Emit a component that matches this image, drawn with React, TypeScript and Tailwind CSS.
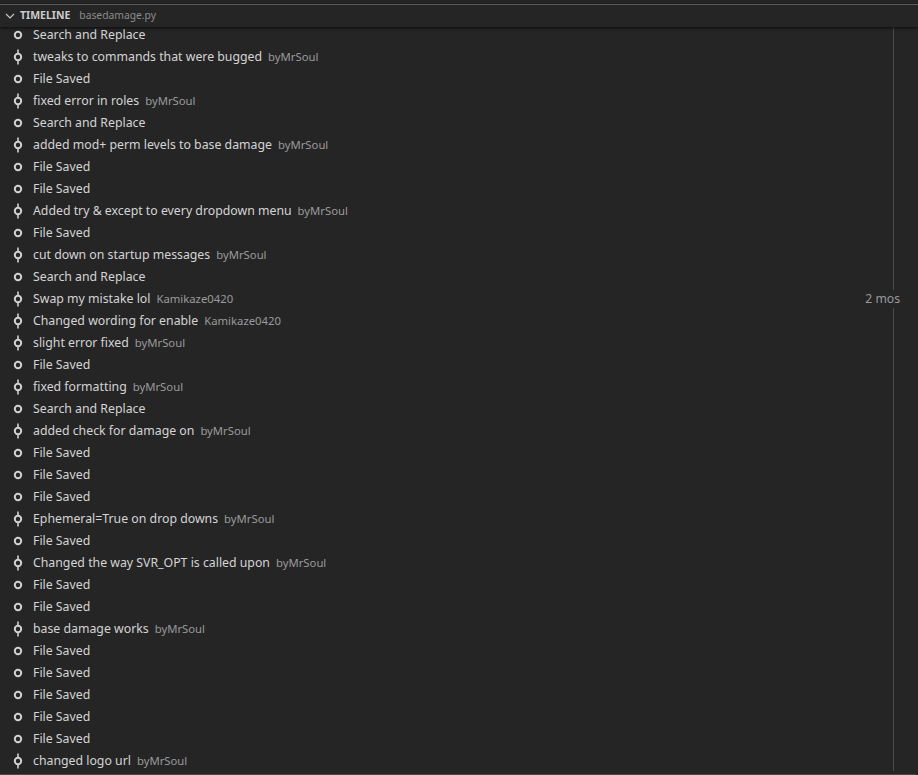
import React from "react";

type Item = { label: string; author?: string; time?: string };

const items: Item[] = [
  { label: "Search and Replace" },
  { label: "tweaks to commands that were bugged", author: "byMrSoul" },
  { label: "File Saved" },
  { label: "fixed error in roles", author: "byMrSoul" },
  { label: "Search and Replace" },
  { label: "added mod+ perm levels to base damage", author: "byMrSoul" },
  { label: "File Saved" },
  { label: "File Saved" },
  { label: "Added try & except to every dropdown menu", author: "byMrSoul" },
  { label: "File Saved" },
  { label: "cut down on startup messages", author: "byMrSoul" },
  { label: "Search and Replace" },
  { label: "Swap my mistake lol", author: "Kamikaze0420", time: "2 mos" },
  { label: "Changed wording for enable", author: "Kamikaze0420" },
  { label: "slight error fixed", author: "byMrSoul" },
  { label: "File Saved" },
  { label: "fixed formatting", author: "byMrSoul" },
  { label: "Search and Replace" },
  { label: "added check for damage on", author: "byMrSoul" },
  { label: "File Saved" },
  { label: "File Saved" },
  { label: "File Saved" },
  { label: "Ephemeral=True on drop downs", author: "byMrSoul" },
  { label: "File Saved" },
  { label: "Changed the way SVR_OPT is called upon", author: "byMrSoul" },
  { label: "File Saved" },
  { label: "File Saved" },
  { label: "base damage works", author: "byMrSoul" },
  { label: "File Saved" },
  { label: "File Saved" },
  { label: "File Saved" },
  { label: "File Saved" },
  { label: "File Saved" },
  { label: "changed logo url", author: "byMrSoul" },
];

const CircleIcon = () => (
  <svg width="16" height="16" viewBox="0 0 16 16" fill="none">
    <circle cx="8" cy="8" r="3.2" stroke="#d0d0d0" strokeWidth="2" />
  </svg>
);

const CommitIcon = () => (
  <svg width="16" height="16" viewBox="0 0 16 16" fill="none">
    <circle cx="8" cy="8" r="3.2" stroke="#d0d0d0" strokeWidth="2" />
    <path d="M8 0.5v4.3M8 11.2v4.3" stroke="#d0d0d0" strokeWidth="1.6" />
  </svg>
);

export default function App() {
  return (
    <div
      className="w-[918px] h-[775px] bg-[#252526] text-[#cccccc] overflow-hidden flex flex-col"
      style={{ fontFamily: '"Noto Sans", "Liberation Sans", sans-serif' }}
    >
      <div className="h-[4px] shrink-0" />
      <div className="relative z-10 h-[23px] shrink-0 border-t border-[#5a5a5a] bg-[#252526] flex items-center shadow-[0_1px_3px_rgba(0,0,0,0.7)]">
        <svg width="16" height="16" viewBox="0 0 16 16" className="ml-[2px] mr-[2px]">
          <path d="M4 6l4 4 4-4" stroke="#c5c5c5" strokeWidth="1.2" fill="none" />
        </svg>
        <span className="text-[10.5px] font-bold text-[#cccccc]">TIMELINE</span>
        <span className="text-[10.3px] text-[#8b8b8b] ml-[9px]">basedamage.py</span>
      </div>
      <div className="relative -mt-[3px] flex-1 flex flex-col">
        <div className="absolute left-[893px] top-[3px] bottom-[4px] w-px bg-[#4a4a4a]" />
        {items.map((it, i) => (
          <div key={i} className="relative h-[22px] shrink-0 flex items-center pl-[10px] pr-[18px]">
            {it.author ? <CommitIcon /> : <CircleIcon />}
            <span className="ml-[7px] text-[12.3px] text-[#d4d4d4] whitespace-nowrap">{it.label}</span>
            {it.author && (
              <span className="ml-[6px] text-[11.3px] text-[#9a9a9a] whitespace-nowrap">{it.author}</span>
            )}
            {it.time && (
              <span className="ml-auto relative z-10 bg-[#252526] text-[12.2px] text-[#9a9a9a] pl-1">{it.time}</span>
            )}
          </div>
        ))}
        <div className="h-px bg-[#4a4a4a] mt-[2px] mr-[2px]" />
      </div>
    </div>
  );
}
